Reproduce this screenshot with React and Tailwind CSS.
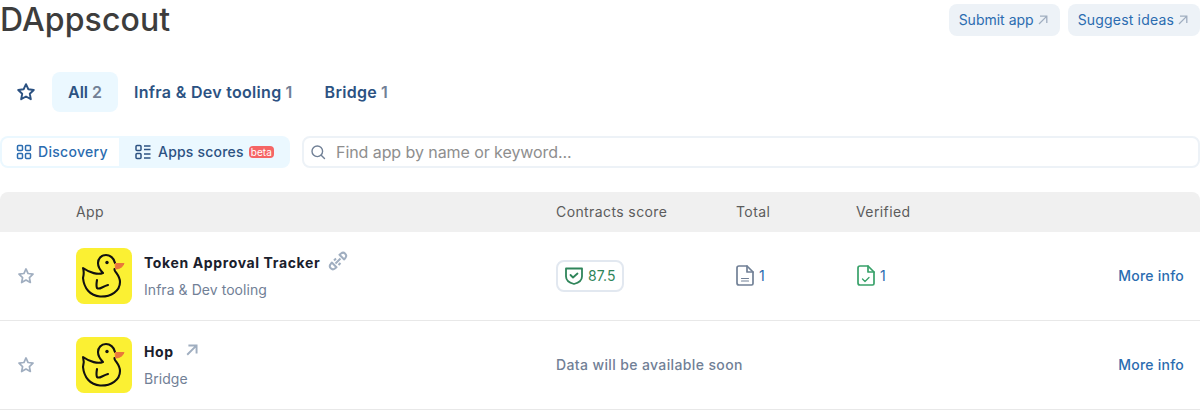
import React from "react";

const Star = ({ c = "#2C5282", s = 20 }) => (
  <svg width={s} height={s} viewBox="0 0 20 20" fill="none" stroke={c} strokeWidth="1.9" strokeLinejoin="round">
    <path d="M10 2.2l2.35 5.05 5.45.7-4.02 3.78 1.05 5.47L10 14.5l-4.83 2.7 1.05-5.47L2.2 7.95l5.45-.7L10 2.2z" />
  </svg>
);

const Arrow = ({ c = "#A0AEC0", s = 10, w = 1.3 }) => (
  <svg width={s} height={s} viewBox="0 0 10 10" fill="none" stroke={c} strokeWidth={w}>
    <path d="M1 9l7.6-7.6M2 1.2h6.8V8" />
  </svg>
);

const Duck = () => (
  <div className="w-14 h-14 rounded-lg bg-[#FBF033] shrink-0 flex items-center justify-center">
    <svg width="56" height="56" viewBox="0 0 56 56" fill="none" stroke="#111" strokeWidth="2.1" strokeLinecap="round" strokeLinejoin="round">
      <path d="M39 15C38 10 34 7 30 7C25 7 22 11 22 15C22 19 24 22 27 25C22 27 14 25 7 20C8 23 8 26 7 30C8 40 14 48 24 48.500C35 49 44 43 44 34C44 29 41 26 39 23C38.500 22 38.500 21.500 38.500 21" />
      <path d="M21 32C20.500 35 20 38 21 40C22 41 24 40.500 26 39.500C28 38.500 30 37.500 32 37" />
      <path d="M39.500 15.500L48 15.500C47 18.500 44 21 40 21Z" fill="#E9773B" stroke="#E9773B" strokeWidth="1" />
      <circle cx="31" cy="14.500" r="1.700" fill="#111" stroke="none" />
    </svg>
  </div>
);

const Doc = ({ c, children }) => (
  <svg width="18" height="21" viewBox="0 0 18 21" fill="none" stroke={c} strokeWidth="1.700" strokeLinejoin="round" strokeLinecap="round">
    <path d="M3 1h8l6 6v11.500c0 .8-.6 1.500-1.500 1.500H3c-1 0-2-.8-2-2V3c0-1.200 1-2 2-2z" />
    <path d="M11 1v6h6" />
    {children}
  </svg>
);

const Row = ({ name, nameIcon, category, children }) => (
  <div className="flex items-center h-[89px] border-b border-[#E8E8E8] pb-px">
    <div className="w-[76px] shrink-0 pl-[17px]"><Star c="#A0AEC0" s={18} /></div>
    <div className="w-[480px] shrink-0 flex items-center gap-3">
      <Duck />
      <div className="flex flex-col">
        <div className="flex items-center h-6">
          <span className="text-sm font-bold text-[#1A202C] tracking-[0.62px]">{name}</span>
          {nameIcon}
        </div>
        <div className="text-sm text-[#718096] leading-5 mt-[5px] tracking-[0.05px]">{category}</div>
      </div>
    </div>
    {children}
    <a className="ml-auto pr-4 text-sm font-medium text-[#2B6CB0] tracking-[0.22px]">More info</a>
  </div>
);

export default function App() {
  return (
    <div className="font-['Inter',sans-serif] w-[1200px] h-[410px] overflow-hidden bg-white">
      <div className="flex items-start justify-between h-[72px]">
        <h1 className="text-[32px] font-medium leading-[40px] text-[#3D3D3D] tracking-[0.1px]">DAppscout</h1>
        <div className="flex gap-2 mt-1">
          <a className="h-8 pl-2.5 pr-3 rounded-lg bg-[#EDF2F7] flex items-center gap-1 text-sm text-[#2B6CB0]">Submit app <Arrow /></a>
          <a className="h-8 pl-2.5 pr-3 rounded-lg bg-[#EDF2F7] flex items-center gap-1 text-sm text-[#2B6CB0] tracking-[0.18px]">Suggest ideas <Arrow /></a>
        </div>
      </div>

      <div className="flex items-center h-10 text-base font-semibold text-[#2C5282]">
        <div className="w-[52px] pl-4 flex items-center"><Star /></div>
        <div className="h-10 px-4 rounded-lg bg-[#EBF8FF] flex items-center gap-1">All <span className="text-[#718096]">2</span></div>
        <div className="h-10 px-4 flex items-center gap-1 tracking-[0.3px]">Infra &amp; Dev tooling <span className="text-[#718096]">1</span></div>
        <div className="h-10 px-4 flex items-center gap-1 tracking-[0.3px]">Bridge <span className="text-[#718096]">1</span></div>
      </div>

      <div className="flex items-center gap-3 mt-6 h-8">
        <div className="flex w-[290px] h-8 shrink-0 rounded-lg bg-[#EBF8FF] p-0.5 text-sm font-medium">
          <div className="w-[117px] bg-white rounded-l-md flex items-center pl-[14px] gap-1.5 text-[#2B6CB0] tracking-[0.3px]">
            <svg width="16" height="16" viewBox="0 0 16 16" fill="none" stroke="#2B6CB0" strokeWidth="1.5">
              <rect x="1.500" y="1.500" width="5" height="5" rx="1" />
              <rect x="9.500" y="1.500" width="5" height="5" rx="1" />
              <rect x="1.500" y="9.500" width="5" height="5" rx="1" />
              <rect x="9.500" y="9.500" width="5" height="5" rx="1" />
            </svg>
            Discovery
          </div>
          <div className="flex items-center pl-[16px] gap-[7px] text-[#2C5282] tracking-[0.2px]">
            <svg width="16" height="16" viewBox="0 0 16 16" fill="none" stroke="#2C5282" strokeWidth="1.5">
              <rect x="1" y="1.500" width="5" height="5" rx="1" />
              <rect x="1" y="9.500" width="5" height="5" rx="1" />
              <path d="M9 2h6.500M9 5.500h6.500M9 10h6.500M9 14h6.500" />
            </svg>
            Apps scores
            <span className="-ml-[2px] h-3 px-[2px] rounded-sm bg-[#F56565] text-white text-[10px] leading-[12px] tracking-[0.1px] font-normal">beta</span>
          </div>
        </div>
        <div className="flex-1 h-8 rounded-lg border-2 border-[#EDF2F7] flex items-center pl-[6px] gap-2.5">
          <svg width="16" height="16" viewBox="0 0 16 16" fill="none" stroke="#718096" strokeWidth="1.400" strokeLinecap="round">
            <circle cx="7.300" cy="7.300" r="5.300" />
            <path d="M11.200 11.200l3.300 3.300" />
          </svg>
          <span className="text-base leading-6 text-[#8E8E8E] tracking-[-0.07px]">Find app by name or keyword...</span>
        </div>
      </div>

      <div className="flex items-center h-10 mt-6 rounded-t-lg bg-[#F0F0F0] text-sm text-[#5C5C5C] tracking-[0.4px]">
        <div className="w-[76px] shrink-0" />
        <div className="w-[480px] shrink-0">App</div>
        <div className="w-[180px] shrink-0">Contracts score</div>
        <div className="w-[120px] shrink-0">Total</div>
        <div>Verified</div>
      </div>

      <Row
        name="Token Approval Tracker"
        category="Infra & Dev tooling"
        nameIcon={
          <svg className="ml-2 -mt-1" width="20" height="20" viewBox="0 0 20 20" fill="none" stroke="#A0AEC0" strokeWidth="2" strokeLinejoin="round">
            <path d="M3.800 11.500l4.700 4.700-1.600 1.300c-1.200 1-3 .9-4.100-.2-1.100-1.100-1.200-2.900-.2-4.100l1.200-1.700z" />
            <path d="M16.200 8.500l-4.700-4.700 1.600-1.300c1.200-1 3-.9 4.100.2 1.100 1.100 1.200 2.900.2 4.100l-1.200 1.700z" />
            <path d="M6 9.500l2-2M10.500 14l2-2" />
            <path d="M7.500 12.500l5-5" />
          </svg>
        }
      >
        <div className="w-[180px] shrink-0">
          <div className="inline-flex items-center h-8 pl-[7px] pr-[6px] gap-[5px] rounded-lg border-2 border-[#E2E8F0] text-sm text-[#2F855A] tracking-[0.1px]">
            <svg width="18" height="18" viewBox="0 0 18 18" fill="none" stroke="#2F855A" strokeWidth="1.800" strokeLinecap="round" strokeLinejoin="round">
              <path d="M1 1.500h16v8c0 3.500-3.200 6.200-8 7.500-4.800-1.300-8-4-8-7.500v-8z" />
              <path d="M5.500 8l2.500 2.500 4.500-4" />
            </svg>
            87.5
          </div>
        </div>
        <div className="w-[120px] shrink-0 flex items-center gap-[5px] text-sm text-[#2B6CB0]">
          <Doc c="#718096">
            <path d="M5.500 13.500h7M5.500 16h7" strokeWidth="1.200" />
          </Doc>
          1
        </div>
        <div className="ml-px flex items-center gap-[5px] text-sm text-[#2B6CB0]">
          <Doc c="#38A169">
            <path d="M5.500 14l2.500 2.500 4-4" strokeWidth="1.300" />
          </Doc>
          1
        </div>
      </Row>

      <Row
        name="Hop"
        category="Bridge"
        nameIcon={<span className="ml-3 -mt-1"><Arrow s={12} w={1.600} /></span>}
      >
        <div className="text-sm font-medium text-[#718096] tracking-[0.37px]">Data will be available soon</div>
      </Row>
    </div>
  );
}
